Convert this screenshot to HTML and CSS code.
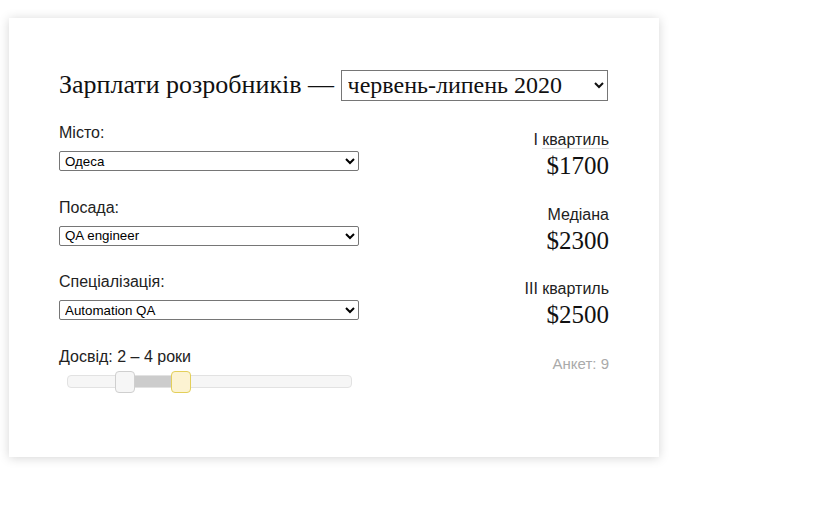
FILE: index.html
```html
<!DOCTYPE html>
<html lang="uk">
<head>
<meta charset="utf-8">
<link rel="stylesheet" href="styles.css">
</head>
<body>
<div class="card">
  <h1 class="title">Зарплати розробників — <select class="period"><option>червень-липень 2020</option></select></h1>
  <div class="row">
    <div class="field">
      <label class="lbl">Місто:</label>
      <select class="sel"><option>Одеса</option></select>
    </div>
    <div class="stat">
      <div class="stat-name">I <span class="abbr">квартиль</span></div>
      <div class="stat-val">$1700</div>
    </div>
  </div>
  <div class="row">
    <div class="field">
      <label class="lbl">Посада:</label>
      <select class="sel"><option>QA engineer</option></select>
    </div>
    <div class="stat">
      <div class="stat-name">Медіана</div>
      <div class="stat-val">$2300</div>
    </div>
  </div>
  <div class="row">
    <div class="field">
      <label class="lbl">Спеціалізація:</label>
      <select class="sel"><option>Automation QA</option></select>
    </div>
    <div class="stat">
      <div class="stat-name">III квартиль</div>
      <div class="stat-val">$2500</div>
    </div>
  </div>
  <div class="row">
    <div class="field">
      <div class="lbl">Досвід: 2 – 4 роки</div>
      <div class="slider">
        <div class="range" style="left:58px;width:56px"></div>
        <span class="handle" style="left:47px"></span>
        <span class="handle active" style="left:103px"></span>
      </div>
    </div>
    <div class="stat">
      <div class="count">Анкет: 9</div>
    </div>
  </div>
</div>
</body>
</html>
```
FILE: styles.css
```css
html, body { margin: 0; padding: 0; background: #fff; }
body { font-family: "Liberation Sans", Arial, sans-serif; color: #222; min-height: 505px; }
.card {
  margin: 18px 0 0 9px;
  width: 650px;
  height: 439px;
  box-sizing: border-box;
  padding: 52px 50px 0 50px;
  background: #fff;
  box-shadow: 0 1px 10px rgba(0,0,0,0.17);
}
.title {
  margin: 0 0 24px 0;
  font-family: "Liberation Serif", "DejaVu Serif", serif;
  font-weight: normal;
  font-size: 26px;
  line-height: 30px;
  height: 30px;
  color: #111;
  display: flex;
  align-items: center;
  white-space: pre;
}
.period {
  font-family: "Liberation Serif", "DejaVu Serif", serif;
  font-size: 24px;
  height: 31px;
  width: 267px;
  border: 1px solid #767676;
  border-radius: 0;
  background: #fff;
  color: #111;
  padding: 0 2px;
}
.row {
  display: flex;
  justify-content: space-between;
  align-items: flex-start;
  height: 47px;
  margin-bottom: 27.5px;
}
.field { width: 300px; }
.lbl {
  display: block;
  font-size: 16px;
  line-height: 18px;
  margin-bottom: 9px;
  color: #222;
}
.sel {
  display: block;
  width: 300px;
  height: 20px;
  font-family: "Liberation Sans", Arial, sans-serif;
  font-size: 13.33px;
  border: 1px solid #767676;
  border-radius: 2px;
  background: #fff;
  color: #000;
  padding: 0 1px;
}
.stat { text-align: right; padding-top: 7px; }
.stat-name { font-size: 16px; line-height: 18px; color: #222; }
.abbr { border-bottom: 1px solid #ddd; }
.stat-val {
  font-family: "Liberation Serif", "DejaVu Serif", serif;
  font-size: 25px;
  line-height: 28px;
  margin-top: 3px;
  color: #111;
}
.count { font-size: 15px; line-height: 18px; color: #aaa; padding-top: 0; }
.slider {
  position: relative;
  margin: 9px 0 0 8px;
  width: 283px;
  height: 11px;
  border: 1px solid #e2e2e2;
  border-radius: 4px;
  background: #f6f6f6;
}
.range {
  position: absolute;
  top: 0;
  bottom: 0;
  background: #cccccc;
}
.handle {
  position: absolute;
  top: -5px;
  width: 20px;
  height: 22px;
  box-sizing: border-box;
  border: 1px solid #cfcfcf;
  border-radius: 4px;
  background: #f6f6f6;
}
.handle.active {
  border-color: #e3cf5a;
  background: #fcf3d2;
}
```
